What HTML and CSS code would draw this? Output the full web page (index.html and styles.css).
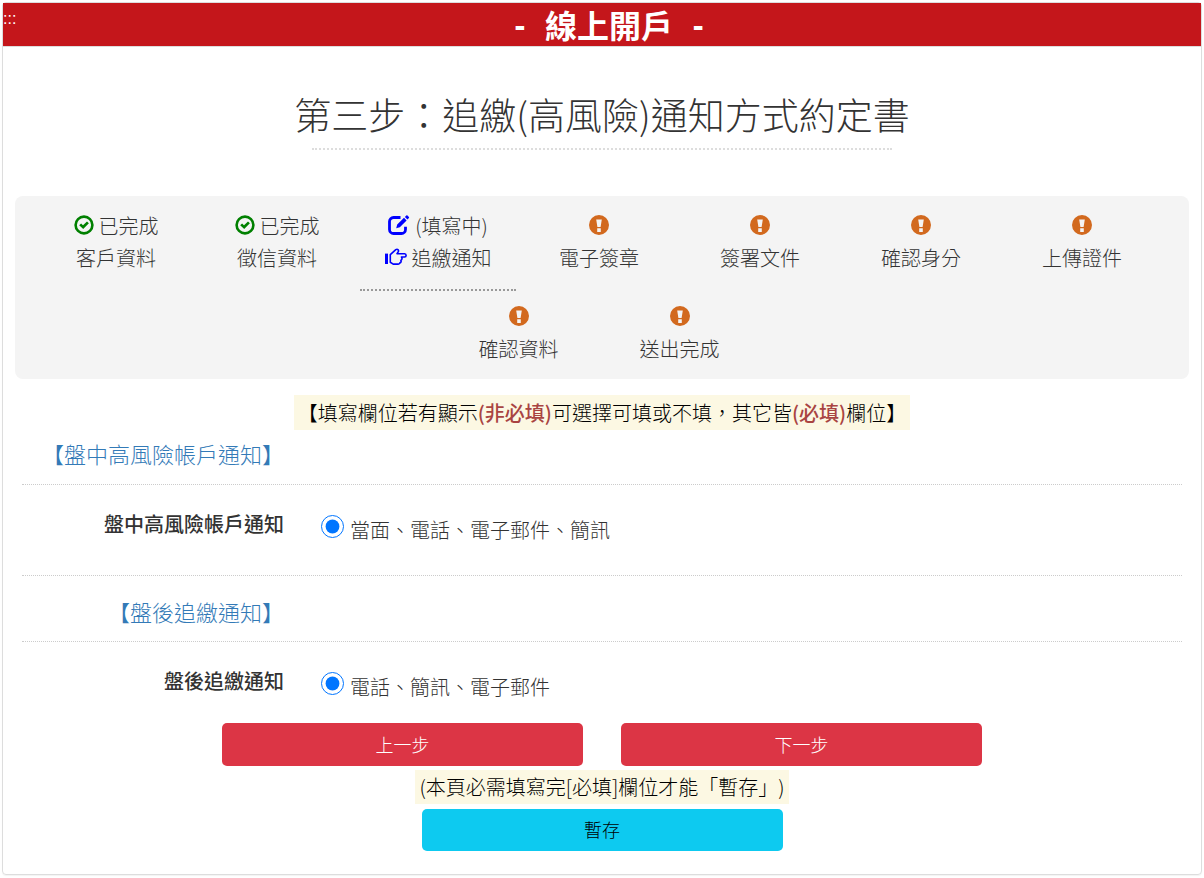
FILE: index.html
```html
<!DOCTYPE html>
<html lang="zh-Hant">
<head>
<meta charset="utf-8">
<meta name="viewport" content="width=device-width, initial-scale=1">
<title>線上開戶</title>
<link rel="stylesheet" href="styles.css">
</head>
<body>
<svg class="sprite" aria-hidden="true">
  <symbol id="i-done" viewBox="0 0 20 20">
    <circle cx="10" cy="10" r="8.4" fill="none" stroke="currentColor" stroke-width="2.6"/>
    <path d="M5.2 10.3 7.1 8.4 9 10.2 13 6.4 14.9 8.3 9.2 14z" fill="currentColor"/>
  </symbol>
  <symbol id="i-todo" viewBox="0 0 20 20">
    <path fill="currentColor" fill-rule="evenodd" d="M10 0a10 10 0 1 0 0 20 10 10 0 0 0 0-20zM7.2 4.6h5.6l-1.2 7.4H8.4zM8.2 13.2h3.6v3.8H8.2z"/>
  </symbol>
  <symbol id="i-edit" viewBox="0 0 22 20">
    <path d="M12.5 2.5H5.5a4 4 0 0 0-4 4v8a4 4 0 0 0 4 4h8a4 4 0 0 0 4-4v-2.8" fill="none" stroke="currentColor" stroke-width="2.8"/>
    <path d="M8.2 13.2 9.2 9.6 16 2.8 18.6 5.4 11.8 12.2zM16.9 1.9 18.3.5Q18.9 0 19.5.5L20.9 1.9Q21.4 2.5 20.9 3.1L19.5 4.5z" fill="currentColor"/>
  </symbol>
  <symbol id="i-hand" viewBox="0 0 22 18">
    <path d="M0 5.6h3v10.4H0z" fill="currentColor"/>
    <path d="M5.3 14.3V6.6L10.8 1.6Q12.2.8 13.2 1.9 13.9 2.8 13.2 3.9L12 5.7h7.6q1.5.2 1.5 1.7t-1.5 1.6h-3.2q.9.9.5 2.1-.2.8-1 1.2.4.8.1 1.6-.3.8-1.1 1-.2 1.1-1.7 1.2H8.2z" fill="none" stroke="currentColor" stroke-width="1.6" stroke-linejoin="round"/>
  </symbol>
</svg>

<div class="card">
  <header class="card-head">
    <a class="anchor" href="#main" title="主要內容區">:::</a>
    <h1 class="brand"><span class="dash">-</span><span>線上開戶</span><span class="dash">-</span></h1>
  </header>
  <main class="card-body" id="main">
    <h2 class="title">第三步：追繳(高風險)通知方式約定書</h2>
    <ol class="steps">
      <li class="step"><span class="line"><svg class="icon done"><use href="#i-done"/></svg>已完成</span><span class="line">客戶資料</span></li>
      <li class="step"><span class="line"><svg class="icon done"><use href="#i-done"/></svg>已完成</span><span class="line">徵信資料</span></li>
      <li class="step current"><span class="line"><svg class="icon edit"><use href="#i-edit"/></svg>(填寫中)</span><span class="line"><svg class="icon hand"><use href="#i-hand"/></svg>追繳通知</span></li>
      <li class="step"><span class="line"><svg class="icon todo"><use href="#i-todo"/></svg></span><span class="line">電子簽章</span></li>
      <li class="step"><span class="line"><svg class="icon todo"><use href="#i-todo"/></svg></span><span class="line">簽署文件</span></li>
      <li class="step"><span class="line"><svg class="icon todo"><use href="#i-todo"/></svg></span><span class="line">確認身分</span></li>
      <li class="step"><span class="line"><svg class="icon todo"><use href="#i-todo"/></svg></span><span class="line">上傳證件</span></li>
      <li class="step"><span class="line"><svg class="icon todo"><use href="#i-todo"/></svg></span><span class="line">確認資料</span></li>
      <li class="step"><span class="line"><svg class="icon todo"><use href="#i-todo"/></svg></span><span class="line">送出完成</span></li>
    </ol>
    <form class="form">
      <p class="note intro">【填寫欄位若有顯示<strong>(非必填)</strong>可選擇可填或不填，其它皆<strong>(必填)</strong>欄位】</p>
      <section class="section">
        <h3 class="section-title"><span>【盤中高風險帳戶通知】</span></h3>
        <div class="row" role="radiogroup" aria-labelledby="l-intraday">
          <span class="row-label" id="l-intraday">盤中高風險帳戶通知</span>
          <label class="option"><input class="radio" type="radio" name="intraday" checked><span class="option-text">當面、電話、電子郵件、簡訊</span></label>
        </div>
      </section>
      <section class="section">
        <h3 class="section-title spaced"><span>【盤後追繳通知】</span></h3>
        <div class="row last" role="radiogroup" aria-labelledby="l-after">
          <span class="row-label" id="l-after">盤後追繳通知</span>
          <label class="option"><input class="radio" type="radio" name="after" checked><span class="option-text">電話、簡訊、電子郵件</span></label>
        </div>
      </section>
      <div class="actions">
        <button class="btn danger" type="button">上一步</button>
        <button class="btn danger" type="button">下一步</button>
      </div>
      <p class="note">(本頁必需填寫完[必填]欄位才能「暫存」)</p>
      <div class="actions">
        <button class="btn info" type="button">暫存</button>
      </div>
    </form>
  </main>
</div>
</body>
</html>
```
FILE: styles.css
```css
* {
  box-sizing: border-box;
}

body {
  margin: 0;
  padding: 2px;
  background: #fff;
  color: #333;
  font-family: "Noto Sans CJK TC", sans-serif;
  font-size: 20px;
  font-weight: 300;
  line-height: 32px;
  text-spacing-trim: space-all;
}

h1,
h2,
h3,
p,
ol {
  margin: 0;
  padding: 0;
  font-weight: inherit;
}

.sprite {
  display: none;
}

.card {
  border: 1px solid #ddd;
  border-radius: 4px;
  box-shadow: 0 1px 1px rgba(0, 0, 0, 0.05);
}

.card-head {
  position: relative;
  height: 44px;
  border-bottom: 1px solid #ddd;
  background: #c4161b;
  color: #fff;
}

.anchor {
  position: absolute;
  top: 0;
  left: 0;
  color: #fff;
  font-family: "Liberation Sans", sans-serif;
  font-size: 16px;
  text-decoration: none;
}

.brand {
  display: flex;
  justify-content: center;
  gap: 20px;
  padding-left: 14px;
  font-size: 32px;
  font-weight: 700;
  line-height: 43px;
}

.dash {
  font-family: "Open Sans", sans-serif;
}

.card-body {
  padding: 39px 12px 23px;
}

.title {
  width: 100%;
  max-width: 640px;
  margin: 0 auto 46px;
  font-size: 37px;
  line-height: 56px;
  text-align: center;
}

.title::after {
  content: "";
  display: block;
  margin: 6px 30px 0;
  border-bottom: 2px dotted #ddd;
}

.steps {
  display: flex;
  flex-wrap: wrap;
  align-items: flex-start;
  justify-content: center;
  gap: 10px 5px;
  padding: 14px 6px 14px 0;
  border-radius: 8px;
  background: #f4f4f4;
  list-style: none;
}

.step {
  flex: 0 0 156px;
}

.line {
  display: flex;
  align-items: center;
  justify-content: center;
  gap: 5px;
  height: 32px;
}

.current {
  padding-bottom: 15px;
  border-bottom: 2px dotted #999;
}

.icon {
  flex: none;
  width: 20px;
  height: 20px;
  margin-bottom: 2px;
}

.done {
  color: green;
}

.todo {
  color: chocolate;
}

.edit,
.hand {
  width: 22px;
  color: blue;
}

.hand {
  height: 18px;
}

.form {
  display: flex;
  flex-direction: column;
  align-items: center;
  padding: 16px 7px 0;
}

.note {
  padding: 1px 4px;
  background: #fcf8e3;
  color: #000;
}

.note strong {
  color: #a94442;
  font-weight: 500;
}

.intro {
  padding: 2px 4px 1px;
}

.section {
  width: 100%;
}

.section-title {
  padding: 7px 0 15px;
  border-bottom: 1px dotted #ccc;
  color: #337ab7;
  font-size: 22px;
}

.section-title span {
  display: block;
  width: 262px;
  text-align: right;
  white-space: nowrap;
}

.spaced {
  padding: 19px 0 14px;
}

.row {
  display: flex;
  gap: 37px;
  padding: 23px 0 29px;
  border-bottom: 1px dotted #ccc;
}

.row-label {
  width: 262px;
  font-weight: 500;
  text-align: right;
}

.option {
  display: flex;
  gap: 6px;
}

.radio {
  width: 23px;
  height: 23px;
  margin: 7px 0 0;
}

.option-text {
  padding-top: 6px;
}

.last {
  padding-bottom: 20px;
  border-bottom: 0;
}

.actions {
  display: flex;
  justify-content: center;
  gap: 38px;
  width: 100%;
}

.btn {
  flex: 0 1 361px;
  height: 43px;
  padding: 0 0 2px;
  border: 0;
  border-radius: 5px;
  font-family: inherit;
  font-size: 18px;
  font-weight: 300;
  cursor: pointer;
}

.danger {
  margin-bottom: 4px;
  background: #dc3545;
  color: #fff;
}

.info {
  height: 42px;
  margin-top: 5px;
  background: #0dcaf0;
  color: #000;
}
```
